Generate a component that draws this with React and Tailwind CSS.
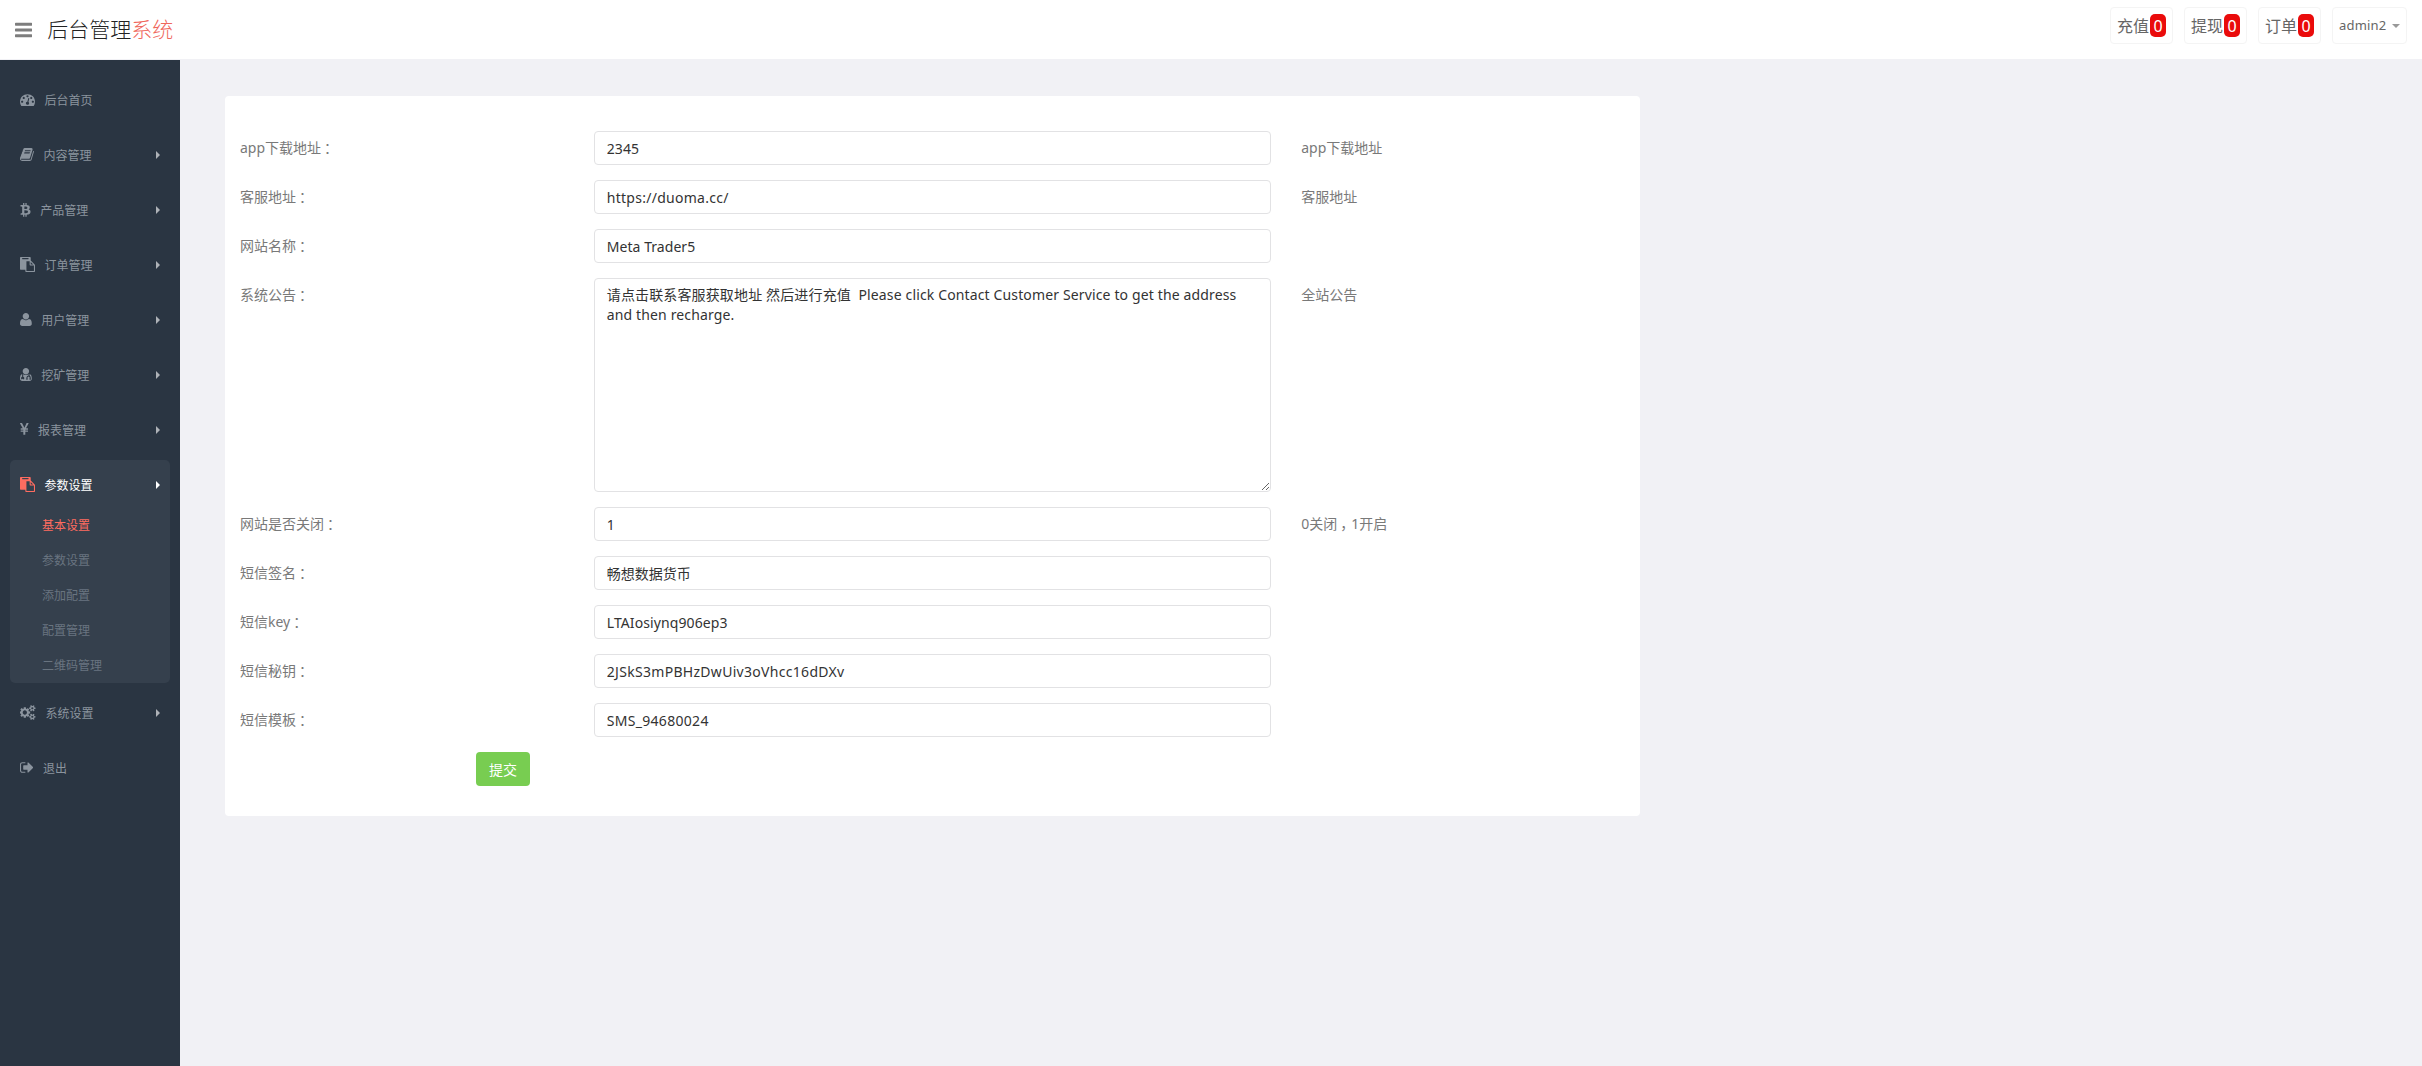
import { useState } from "react";

// icon outlines on the 1792 grid: [x offset, width, path]
const ICONS = {
  bars: [128, 1536, "M1664 1344v128q0 26-19 45t-45 19h-1408q-26 0-45-19t-19-45v-128q0-26 19-45t45-19h1408q26 0 45 19t19 45zm0-512v128q0 26-19 45t-45 19h-1408q-26 0-45-19t-19-45v-128q0-26 19-45t45-19h1408q26 0 45 19t19 45zm0-512v128q0 26-19 45t-45 19h-1408q-26 0-45-19t-19-45v-128q0-26 19-45t45-19h1408q26 0 45 19t19 45z"],
  dashboard: [0, 1792, "M384 1152q0-53-37.5-90.5t-90.5-37.5-90.5 37.5-37.5 90.5 37.5 90.5 90.5 37.5 90.5-37.5 37.5-90.5zm192-448q0-53-37.5-90.5t-90.5-37.5-90.5 37.5-37.5 90.5 37.5 90.5 90.5 37.5 90.5-37.5 37.5-90.5zm428 481l101-382q6-26-7.5-48.5t-38.5-29.5-48 6.5-30 39.5l-101 382q-60 5-107 43.5t-63 98.5q-20 77 20 146t117 89 146-20 89-117q16-60-6-117t-72-91zm660-33q0-53-37.5-90.5t-90.5-37.5-90.5 37.5-37.5 90.5 37.5 90.5 90.5 37.5 90.5-37.5 37.5-90.5zm-640-640q0-53-37.5-90.5t-90.5-37.5-90.5 37.5-37.5 90.5 37.5 90.5 90.5 37.5 90.5-37.5 37.5-90.5zm448 192q0-53-37.5-90.5t-90.5-37.5-90.5 37.5-37.5 90.5 37.5 90.5 90.5 37.5 90.5-37.5 37.5-90.5zm320 448q0 261-141 483-19 29-54 29h-1402q-35 0-54-29-141-221-141-483 0-182 71-348t191-286 286-191 348-71 348 71 286 191 191 286 71 348z"],
  book: [64, 1664, "M1703 478q40 57 18 129l-275 906q-19 64-76.5 107.5t-122.5 43.5h-923q-77 0-148.5-53.5t-99.5-131.5q-24-67-2-127 0-4 3-27t4-37q1-8-3-21.5t-3-19.5q2-11 8-21t16.5-23.5 16.5-23.5q23-38 45-91.5t30-91.5q3-10 .5-30t-.5-28q3-11 17-28t17-23q21-36 42-92t25-90q1-9-2.5-32t.5-28q4-13 22-30.5t22-22.5q19-26 42.5-84.5t27.5-96.5q1-8-3-25.5t-2-26.5q2-8 9-18t18-23 17-21q8-12 16.5-30.5t15-35 16-36 19.5-32 26.5-23.5 36-11.5 47.5 5.5l-1 3q38-9 51-9h761q74 0 114 56t18 130l-274 906q-36 119-71.5 153.5t-128.5 34.5h-869q-27 0-38 15-11 16-1 43 24 70 144 70h923q29 0 56-15.5t35-41.5l300-987q7-22 5-57 38 15 59 43zm-1064 2q-4 13 2 22.5t20 9.5h608q13 0 25.5-9.5t16.5-22.5l21-64q4-13-2-22.5t-20-9.5h-608q-13 0-25.5 9.5t-16.5 22.5zm-83 256q-4 13 2 22.5t20 9.5h608q13 0 25.5-9.5t16.5-22.5l21-64q4-13-2-22.5t-20-9.5h-608q-13 0-25.5 9.5t-16.5 22.5z"],
  bitcoin: [256, 1280, "M1424 624q18 182-131 258 117 28 175 103t45 214q-7 71-32.5 125t-64.5 89-97 58.5-121.5 34.5-145.5 15v255h-154v-251q-80 0-122-1v252h-154v-255q-18 0-54-.5t-55-.5h-200l31-183h111q50 0 58-51v-402h16q-6-1-16-1v-287q-13-68-89-68h-111v-164l212 1q64 0 97-1v-252h154v247q82-2 122-2v-245h154v252q79 7 140 22.5t113 45 82.5 78 36.5 114.5zm-215 545q0-36-15-64t-37-46-57.5-30.5-65.5-18.5-74-9-69-3-64.5 1-47.5 1v338q8 0 37 .5t48 .5 53-1.5 58.5-4 57-8.5 55.5-14 47.5-21 39.5-30 24.5-40 9.5-51zm-71-476q0-33-12.5-58.5t-30.5-42-48-28-55-16.5-61.5-8-58-2.5-54 1-39.5.5v307q5 0 34.5.5t46.5 0 50-2 55-5.5 51.5-11 48.5-18.5 37-27 27-38.5 9-51z"],
  paste: [0, 1792, "M768 1664h896v-640h-416q-40 0-68-28t-28-68v-416h-384v1152zm256-1440v-64q0-13-9.5-22.5t-22.5-9.5h-704q-13 0-22.5 9.5t-9.5 22.5v64q0 13 9.5 22.5t22.5 9.5h704q13 0 22.5-9.5t9.5-22.5zm256 672h299l-299-299v299zm512 128v672q0 40-28 68t-68 28h-960q-40 0-68-28t-28-68v-160h-544q-40 0-68-28t-28-68v-1344q0-40 28-68t68-28h1088q40 0 68 28t28 68v328q21 13 36 28l408 408q28 28 48 76t20 88z"],
  user: [192, 1408, "M1600 1405q0 120-73 189.5t-194 69.5h-874q-121 0-194-69.5t-73-189.5q0-53 3.5-103.5t14-109 26.5-108.5 43-97.5 62-81 85.5-53.5 111.5-20q9 0 42 21.5t74.5 48 108 48 133.5 21.5 133.5-21.5 108-48 74.5-48 42-21.5q61 0 111.5 20t85.5 53.5 62 81 43 97.5 26.5 108.5 14 109 3.5 103.5zm-320-893q0 159-112.5 271.5t-271.5 112.5-271.5-112.5-112.5-271.5 112.5-271.5 271.5-112.5 271.5 112.5 112.5 271.5z"],
  doctor: [192, 1408, "M576 1472q0 26-19 45t-45 19-45-19-19-45 19-45 45-19 45 19 19 45zm1024-73q0 121-73 193t-194 72h-874q-121 0-194-72t-73-193q0-68 5.5-131t24-138 47.5-132.5 81-103 120-60.5q-22 52-22 120v203q-58 20-93 70t-35 111q0 80 56 136t136 56 136-56 56-136q0-61-35.5-111t-92.5-70v-203q0-62 25-93 132 104 295 104t295-104q25 31 25 93v64q-106 0-181 75t-75 181v89q-32 29-32 71 0 40 28 68t68 28 68-28 28-68q0-42-32-71v-89q0-52 38-90t90-38 90 38 38 90v89q-32 29-32 71 0 40 28 68t68 28 68-28 28-68q0-42-32-71v-89q0-68-34.5-127.5t-93.5-93.5q0-10 .5-42.5t0-48-2.5-41.5-7-47-13-40q68 15 120 60.5t81 103 47.5 132.5 24 138 5.5 131zm-320-887q0 159-112.5 271.5t-271.5 112.5-271.5-112.5-112.5-271.5 112.5-271.5 271.5-112.5 271.5 112.5 112.5 271.5z"],
  yen: [383, 1027, "M985 1536h-172q-13 0-22.5-9t-9.5-23v-330h-288q-13 0-22.5-9t-9.5-23v-103q0-13 9.5-22.5t22.5-9.5h288v-85h-288q-13 0-22.5-9t-9.5-23v-104q0-13 9.5-22.5t22.5-9.5h214l-321-578q-8-16 0-32 10-16 28-16h194q19 0 29 18l215 425q19 38 56 125 10-24 30.5-68t27.5-61l191-420q8-19 29-19h191q17 0 27 16 9 14 1 31l-313 579h215q13 0 22.5 9.5t9.5 22.5v104q0 14-9.5 23t-22.5 9h-290v85h290q13 0 22.5 9.5t9.5 22.5v103q0 14-9.5 23t-22.5 9h-290v330q0 13-9.5 22.5t-22.5 9.5z"],
  cogs: [0, 1920, "M832 896q0-106-75-181t-181-75-181 75-75 181 75 181 181 75 181-75 75-181zm768 512q0-52-38-90t-90-38-90 38-38 90q0 53 37.5 90.5t90.5 37.5 90.5-37.5 37.5-90.5zm0-1024q0-52-38-90t-90-38-90 38-38 90q0 53 37.5 90.5t90.5 37.5 90.5-37.5 37.5-90.5zm-384 421v185q0 10-7 19.5t-16 10.5l-155 24q-11 35-32 76 34 48 90 115 7 11 7 20 0 12-7 19-23 30-82.5 89.5t-78.5 59.5q-11 0-21-7l-115-90q-37 19-77 31-11 108-23 155-7 24-30 24h-186q-11 0-20-7.5t-10-17.5l-23-153q-34-10-75-31l-118 89q-7 7-20 7-11 0-21-8-144-133-144-160 0-9 7-19 10-14 41-53t47-61q-23-44-35-82l-152-24q-10-1-17-9.5t-7-19.5v-185q0-10 7-19.5t16-10.5l155-24q11-35 32-76-34-48-90-115-7-11-7-20 0-12 7-20 22-30 82-89t79-59q11 0 21 7l115 90q34-18 77-32 11-108 23-154 7-24 30-24h186q11 0 20 7.5t10 17.5l23 153q34 10 75 31l118-89q8-7 20-7 11 0 21 8 144 133 144 160 0 8-7 19-12 16-42 54t-45 60q23 48 34 82l152 23q10 2 17 10.5t7 19.5zm640 533v140q0 16-149 31-12 27-30 52 51 113 51 138 0 4-4 7-122 71-124 71-8 0-46-47t-52-68q-20 2-30 2t-30-2q-14 21-52 68t-46 47q-2 0-124-71-4-3-4-7 0-25 51-138-18-25-30-52-149-15-149-31v-140q0-16 149-31 13-29 30-52-51-113-51-138 0-4 4-7 4-2 35-20t59-34 30-16q8 0 46 46.5t52 67.5q20-2 30-2t30 2q51-71 92-112l6-2q4 0 124 70 4 3 4 7 0 25-51 138 17 23 30 52 149 15 149 31zm0-1024v140q0 16-149 31-12 27-30 52 51 113 51 138 0 4-4 7-122 71-124 71-8 0-46-47t-52-68q-20 2-30 2t-30-2q-14 21-52 68t-46 47q-2 0-124-71-4-3-4-7 0-25 51-138-18-25-30-52-149-15-149-31v-140q0-16 149-31 13-29 30-52-51-113-51-138 0-4 4-7 4-2 35-20t59-34 30-16q8 0 46 46.5t52 67.5q20-2 30-2t30 2q51-71 92-112l6-2q4 0 124 70 4 3 4 7 0 25-51 138 17 23 30 52 149 15 149 31z"],
  signout: [64, 1600, "M704 1440q0 4 1 20t.5 26.5-3 23.5-10 19.5-20.5 6.5h-320q-119 0-203.5-84.5t-84.5-203.5v-704q0-119 84.5-203.5t203.5-84.5h320q13 0 22.5 9.5t9.5 22.5q0 4 1 20t.5 26.5-3 23.5-10 19.5-20.5 6.5h-320q-66 0-113 47t-47 113v704q0 66 47 113t113 47h312l11.5 1 11.5 3 8 5.5 7 9 2 13.5zm928-544q0 26-19 45l-544 544q-19 19-45 19t-45-19-19-45v-288h-448q-26 0-45-19t-19-45v-384q0-26 19-45t45-19h448v-288q0-26 19-45t45-19 45 19l544 544q19 19 19 45z"],
};

const MENU = [
  { icon: "dashboard", label: "后台首页", leaf: true },
  { icon: "book", label: "内容管理" },
  { icon: "bitcoin", label: "产品管理" },
  { icon: "paste", label: "订单管理" },
  { icon: "user", label: "用户管理" },
  { icon: "doctor", label: "挖矿管理" },
  { icon: "yen", label: "报表管理" },
  {
    icon: "paste",
    label: "参数设置",
    children: ["基本设置", "参数设置", "添加配置", "配置管理", "二维码管理"],
  },
  { icon: "cogs", label: "系统设置" },
  { icon: "signout", label: "退出", leaf: true },
];

const FIELDS = [
  { label: "app下载地址：", value: "2345", help: "app下载地址", tracking: "tracking-[0.1px]" },
  { label: "客服地址：", value: "https://duoma.cc/", help: "客服地址", tracking: "tracking-[0.27px]" },
  { label: "网站名称：", value: "Meta Trader5", tracking: "tracking-[0.05px]" },
  {
    label: "系统公告：",
    value:
      "请点击联系客服获取地址 然后进行充值  Please click Contact Customer Service to get the address and then recharge.",
    help: "全站公告",
    multiline: true,
    tracking: "tracking-[0.14px]",
  },
  { label: "网站是否关闭：", value: "1", help: "0关闭，1开启" },
  { label: "短信签名：", value: "畅想数据货币" },
  { label: "短信key：", value: "LTAIosiynq906ep3", tracking: "tracking-[0.1px]" },
  { label: "短信秘钥：", value: "2JSkS3mPBHzDwUiv3oVhcc16dDXv", tracking: "tracking-[0.3px]" },
  { label: "短信模板：", value: "SMS_94680024", tracking: "tracking-[0.3px]" },
];

function Icon({ name, size = 15, className = "" }) {
  const [x, w, d] = ICONS[name];
  return (
    <svg
      viewBox={`${x} 0 ${w} 1792`}
      width={(w / 1792) * size}
      height={size}
      fill="currentColor"
      className={`shrink-0 ${className}`}
    >
      <path d={d} />
    </svg>
  );
}

// full-width colons and commas sit in the middle of their cell
function Cjk({ text = "" }) {
  return text.split(/([：，])/).map((part, i) =>
    part === "：" || part === "，" ? (
      <span key={i} className="ml-[3px] -mr-[3px]">
        {part}
      </span>
    ) : (
      part
    )
  );
}

function MenuItem({ item }) {
  const active = Boolean(item.children);
  return (
    <li className={active ? "mb-[5px] rounded-[5px] bg-[#35404d]" : "mb-[5px]"}>
      <a
        href="#"
        className={`flex h-[50px] items-center pl-[10px] pr-[10px] text-[12px] ${
          active ? "text-white" : "text-[#8b949e]"
        }`}
      >
        <Icon name={item.icon} className={active ? "mb-[1px] text-[#ff6c60]" : "mb-[1px]"} />
        <span className="ml-[9.5px] mt-[1px] leading-[18px]">{item.label}</span>
        {!item.leaf && (
          <span
            className={`ml-auto border-y-4 border-l-4 border-y-transparent ${
              active ? "border-l-white" : "border-l-[#aeb2b7]"
            }`}
          />
        )}
      </a>
      {active && (
        <ul className="-mt-[2px]">
          {item.children.map((label, i) => (
            <li key={label}>
              <a
                href="#"
                className={`flex h-[35px] items-center pl-[32px] text-[12px] ${
                  i === 0 ? "text-[#ff6c60]" : "text-[#697480]"
                }`}
              >
                {label}
              </a>
            </li>
          ))}
        </ul>
      )}
    </li>
  );
}

function Counter({ label, count }) {
  return (
    <a
      href="#"
      className="flex h-[37px] items-center rounded-[4px] border border-[#f4f4f4] px-[6px] text-[16px] text-[#666]"
    >
      {label}
      <span className="ml-[1px] flex h-[23px] w-[16px] items-center justify-center rounded-[5px] bg-[#ea0b0b] text-white">
        {count}
      </span>
    </a>
  );
}

function Field({ field }) {
  const [value, setValue] = useState(field.value);
  const control = `block w-full rounded-[4px] border border-[#e2e2e4] bg-white px-3 py-[6px] text-[14px] leading-5 text-[#333] outline-none ${
    field.tracking || ""
  }`;
  return (
    <div className="mb-[15px] grid grid-cols-4 text-[14px] leading-5 text-[#797979]">
      <label className="px-[15px] pt-[7px]">
        <Cjk text={field.label} />
      </label>
      <div className="col-span-2 px-[15px]">
        {field.multiline ? (
          <textarea
            className={`${control} h-[214px] resize`}
            value={value}
            onChange={(e) => setValue(e.target.value)}
          />
        ) : (
          <input
            type="text"
            className={`${control} h-[34px]`}
            value={value}
            onChange={(e) => setValue(e.target.value)}
          />
        )}
      </div>
      <span className="px-[15px] pt-[7px]">
        <Cjk text={field.help} />
      </span>
    </div>
  );
}

export default function App() {
  return (
    <div className="flex h-[1066px] flex-col bg-[#f1f1f5] font-['Noto_Sans','Noto_Sans_CJK_SC',sans-serif]">
      <header className="flex h-[60px] shrink-0 border-b border-[#f1f1f5] bg-white pl-[15px] pr-[15px]">
        <div className="flex items-center">
          <Icon name="bars" size={20} className="text-[#7d7d7d]" />
          <a href="#" className="ml-[15px] text-[21px] font-light text-[#222]">
            后台管理<span className="text-[#f0675c]">系统</span>
          </a>
        </div>
        <nav className="ml-auto flex gap-[11px] pt-[7px]">
          <Counter label="充值" count={0} />
          <Counter label="提现" count={0} />
          <Counter label="订单" count={0} />
          <a
            href="#"
            className="flex h-[37px] w-[75px] items-center rounded-[4px] border border-[#f4f4f4] px-[6px] text-[13px] tracking-[0.2px] text-[#666]"
          >
            admin2
            <span className="ml-auto border-x-4 border-t-4 border-x-transparent border-t-[#999]" />
          </a>
        </nav>
      </header>
      <div className="flex flex-1">
        <aside className="w-[180px] bg-[#2a3542] px-[10px] pt-[15px]">
          <ul>
            {MENU.map((item, i) => (
              <MenuItem key={i} item={item} />
            ))}
          </ul>
        </aside>
        <main className="pl-[45px] pt-9">
          <form className="h-[720px] w-[1415px] rounded-[4px] bg-white pt-[35px]">
            {FIELDS.map((field) => (
              <Field key={field.label} field={field} />
            ))}
            <button
              type="button"
              className="ml-[251px] block h-[34px] w-[54px] rounded-[4px] bg-[#78cd51] text-[14px] text-white"
            >
              提交
            </button>
          </form>
        </main>
      </div>
    </div>
  );
}
